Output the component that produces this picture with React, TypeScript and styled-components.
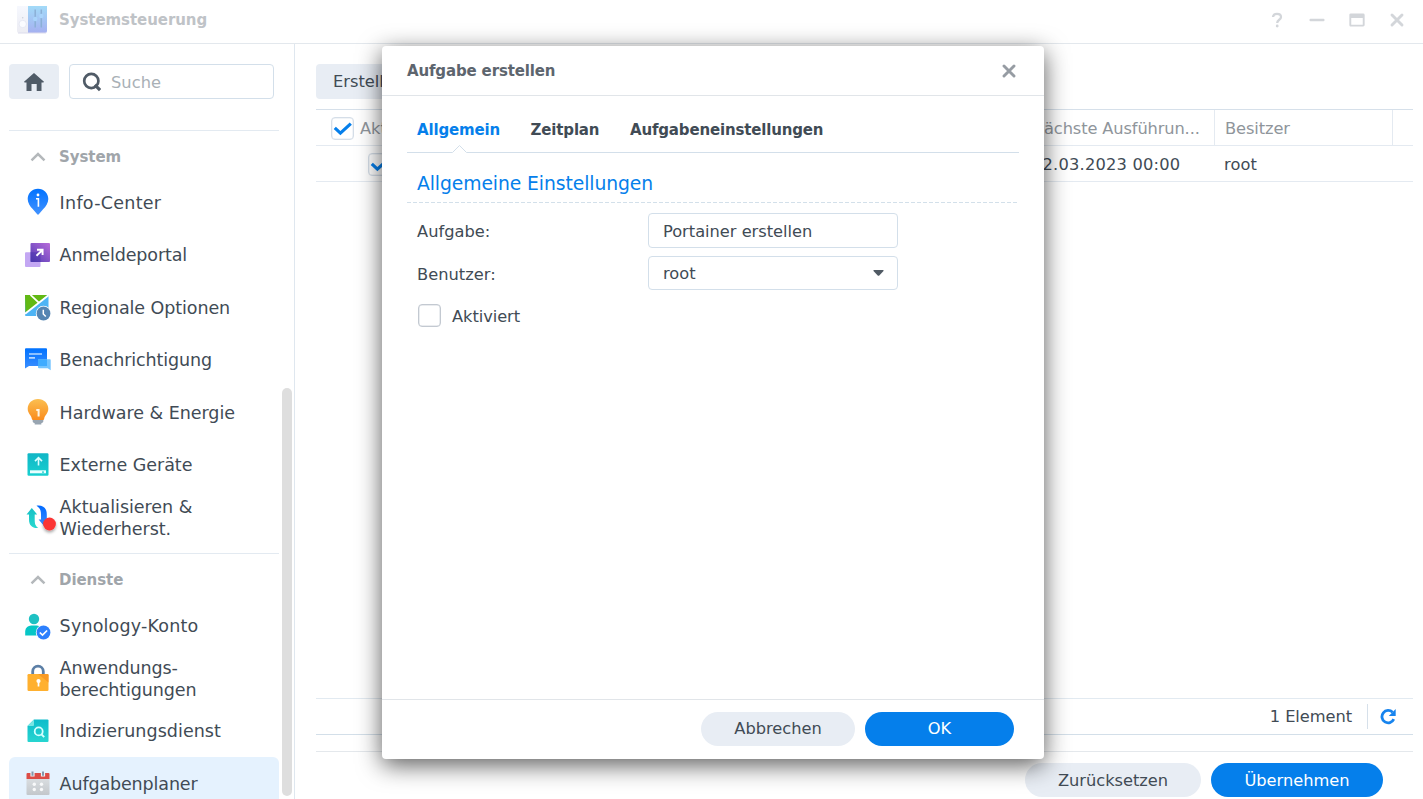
import React from "react";
import styled, { createGlobalStyle, css } from "styled-components";

const GlobalStyle = createGlobalStyle`
  * { box-sizing: border-box; }
  html, body { margin: 0; padding: 0; overflow: hidden; }
  body {
    background: #fff;
    color: #414b55;
    font-family: Verdana, "DejaVu Sans", sans-serif;
    font-size: 16.25px;
    letter-spacing: -0.004em;
  }
  svg { display: block; flex: none; }
`;

const Window = styled.div`
  position: relative;
  display: flex;
  flex-direction: column;
  width: 1423px;
  height: 799px;
  overflow: hidden;
`;

const TitleBar = styled.header`
  display: flex;
  align-items: center;
  height: 44px;
  padding: 0 18px 4px 17px;
  border-bottom: 1px solid #e3e8ed;
`;

const WindowTitle = styled.div`
  flex: 1;
  margin-left: 12px;
  font-size: 15px;
  font-weight: bold;
  color: #bfc3c7;
`;

const WindowControls = styled.div`
  display: flex;
  gap: 24px;
`;

const Body = styled.div`
  flex: 1;
  display: flex;
  min-height: 0;
`;

const Sidebar = styled.nav`
  position: relative;
  width: 295px;
  padding: 20px 15px 0 9px;
  border-right: 1px solid #dfe7ef;
  overflow: hidden;
`;

const SidebarTools = styled.div`
  display: flex;
  gap: 10px;
  margin-bottom: 31px;
`;

const HomeButton = styled.button`
  display: flex;
  align-items: center;
  justify-content: center;
  width: 50px;
  height: 35px;
  padding: 0;
  border: 0;
  border-radius: 4px;
  background: #e8edf4;
`;

const SearchBox = styled.div`
  display: flex;
  align-items: center;
  gap: 10px;
  width: 205px;
  height: 35px;
  padding: 1px 0 0 11px;
  border: 1px solid #d3dfea;
  border-radius: 4px;
  color: #a9b0b6;
  letter-spacing: 0.05px;
`;

const Group = styled.section`
  border-top: 1px solid #e3eaf1;
  padding-bottom: 9.9px;
`;

const GroupHeader = styled.div`
  display: flex;
  align-items: center;
  height: 45px;
  padding: 7px 0 0 21px;
  gap: 13px;
  font-size: 15px;
  font-weight: bold;
  color: #a0a5aa;
  svg { margin-top: -1px; }
`;

const Item = styled.div<{ $selected?: boolean; $spacing?: number }>`
  display: flex;
  align-items: center;
  gap: 6.6px;
  height: 52.5px;
  padding-left: 14px;
  border-radius: 6px;
  font-size: 17.5px;
  line-height: 22px;
  letter-spacing: ${(p) => p.$spacing ?? -0.09}px;
  background: ${(p) => (p.$selected ? "#e5f2fe" : "transparent")};
  svg { overflow: visible; }
`;

const ItemText = styled.span`
  padding-top: 1px;
`;

const ScrollThumb = styled.div`
  position: absolute;
  top: 344px;
  left: 282px;
  width: 10px;
  height: 408px;
  border-radius: 5px;
  background: #dedede;
`;

const Main = styled.main`
  flex: 1;
  display: flex;
  flex-direction: column;
  padding: 20px 10px 0 21px;
`;

const ToolButton = styled.button`
  width: 116px;
  height: 35px;
  margin-bottom: 10px;
  padding: 0 0 0 17px;
  border: 0;
  border-radius: 4px;
  background: #e8edf4;
  color: #414b55;
  font: inherit;
  text-align: left;
`;

const Table = styled.div`
  flex: 1;
  border-top: 1px solid #d6e0ea;
`;

const Row = styled.div<{ $head?: boolean }>`
  display: grid;
  grid-template-columns: 706px 193px 178px 1fr;
  height: 36px;
  border-bottom: 1px solid #e4eaf1;
  color: ${(p) => (p.$head ? "#8f959b" : "#414b55")};
`;

const Cell = styled.div<{ $divided?: boolean; $pad?: number; $spacing?: number }>`
  display: flex;
  align-items: center;
  padding-top: 2px;
  padding-left: ${(p) => p.$pad ?? 10}px;
  letter-spacing: ${(p) => p.$spacing ?? 0}px;
  white-space: nowrap;
  ${(p) => p.$divided && css`border-right: 1px solid #e4eaf1;`}
`;

const CheckBox = styled.span<{ $strong?: boolean }>`
  display: flex;
  align-items: center;
  justify-content: center;
  width: 23px;
  height: 23px;
  border: 1px solid ${(p) => (p.$strong ? "#c3c9d1" : "#d5dee8")};
  border-radius: 4px;
  background: #fff;
  box-shadow: inset 0 0 0 0.5px ${(p) => (p.$strong ? "#d5dae0" : "#e3e9f0")};
`;

const HeadLabel = styled.span`
  margin-left: 6px;
`;

const StatusBar = styled.div`
  display: flex;
  align-items: center;
  justify-content: flex-end;
  height: 37px;
  padding-right: 17px;
  border-top: 1px solid #e2eaf1;
  border-bottom: 1px solid #d3dfe9;
`;

const StatusDivider = styled.div`
  width: 1px;
  height: 25px;
  margin: 0 12px 0 15px;
  background: #d6e0ea;
`;

const ActionBar = styled.div`
  display: flex;
  justify-content: flex-end;
  gap: 10px;
  height: 48px;
  margin-top: 16px;
  padding: 11px 30px 0 0;
  border-top: 1px solid #e4e8ec;
`;

const PillButton = styled.button<{ $primary?: boolean; $width: number; $drop?: number }>`
  width: ${(p) => p.$width}px;
  height: 34px;
  padding: 0;
  border: 0;
  border-radius: 17px;
  background: ${(p) => (p.$primary ? "#057feb" : "#e8edf4")};
  color: ${(p) => (p.$primary ? "#fff" : "#414b55")};
  font: inherit;
  line-height: 34px;
  padding-top: ${(p) => p.$drop ?? 0}px;
  letter-spacing: -0.02px;
`;

const Dialog = styled.div`
  position: absolute;
  top: 46px;
  left: 382px;
  display: flex;
  flex-direction: column;
  width: 662px;
  height: 713px;
  border-radius: 4px;
  background: #fff;
  box-shadow: 0 6px 25px rgba(0, 0, 0, 0.65);
`;

const DialogHeader = styled.div`
  display: flex;
  align-items: center;
  justify-content: space-between;
  height: 50px;
  padding: 0 28px 0 25px;
  border-bottom: 1px solid #e1e5e9;
  font-size: 15px;
  font-weight: bold;
  letter-spacing: -0.15px;
  color: #5d656e;
`;

const DialogBody = styled.div`
  flex: 1;
  padding: 0 25px;
`;

const Tabs = styled.div`
  display: flex;
  gap: 30.6px;
  height: 57px;
  padding: 0 10px;
  border-bottom: 1px solid #d3dfea;
`;

const Tab = styled.div<{ $active?: boolean }>`
  position: relative;
  line-height: 69px;
  font-size: 15px;
  font-weight: bold;
  letter-spacing: -0.16px;
  color: ${(p) => (p.$active ? "#057feb" : "#414b55")};
`;

const Notch = styled.svg`
  position: absolute;
  left: 34px;
  top: 48px;
`;

const SectionTitle = styled.div`
  height: 50px;
  padding-left: 10px;
  font-size: 18.75px;
  line-height: 62px;
  letter-spacing: -0.09px;
  color: #057feb;
  background: repeating-linear-gradient(90deg, #d3e0ea 0 4px, transparent 4px 6px) left bottom / 100% 1px no-repeat;
`;

const Field = styled.div<{ $top: number; $indent?: number }>`
  display: flex;
  align-items: center;
  margin-top: ${(p) => p.$top}px;
  padding-left: ${(p) => p.$indent ?? 10}px;
`;

const FieldLabel = styled.label`
  width: 231px;
  padding-top: 2px;
  letter-spacing: 0.02px;
`;

const Input = styled.div<{ $height: number; $drop?: number }>`
  display: flex;
  align-items: center;
  justify-content: space-between;
  width: 250px;
  height: ${(p) => p.$height}px;
  padding: ${(p) => p.$drop ?? 0}px 13px 0 14px;
  border: 1px solid #d3dfea;
  border-radius: 4px;
  letter-spacing: -0.02px;
`;

const CheckLabel = styled.span`
  margin-left: 11px;
  padding-top: 1px;
`;

const DialogFooter = styled.div`
  display: flex;
  justify-content: flex-end;
  gap: 10px;
  height: 60px;
  padding: 12px 30px 0 0;
  border-top: 1px solid #e1e5e9;
`;

const Icon = ({ children }: { children: React.ReactNode }) => (
  <svg width="30" height="30" viewBox="0 0 30 30" fill="none">{children}</svg>
);

const Gradient = ({ id, from, to }: { id: string; from: string; to: string }) => (
  <linearGradient id={id} x1="0" y1="0" x2="0" y2="1">
    <stop stopColor={from} />
    <stop offset="1" stopColor={to} />
  </linearGradient>
);

const AppIcon = () => (
  <svg width="30" height="30" viewBox="0 0 30 30">
    <defs><Gradient id="app" from="#a2daf8" to="#a5b0f0" /><Gradient id="appw" from="#f6f8fe" to="#ececf3" /></defs>
    <path d="M0 1h12v27H2a2 2 0 0 1-2-2z" fill="url(#appw)" />
    <path d="M11 1h19v25a2 2 0 0 1-2 2H11z" fill="url(#app)" />
    <path d="M1 28h28" stroke="#dcdcec" />
    <path d="M18.200 4.500v18M24.300 4.500v18" stroke="#8bb0d6" strokeWidth="1.500" />
    <circle cx="18.200" cy="14" r="2.200" fill="#a9d4fb" />
    <circle cx="24.300" cy="11" r="2.200" fill="#a9d4fb" />
    <circle cx="5.700" cy="19" r="3.700" fill="#fafbff" stroke="#e2e5f1" strokeWidth=".8" />
    <circle cx="5.700" cy="12.800" r=".8" fill="#cdd1dc" />
  </svg>
);

const CloseIcon = ({ color, size = 14 }: { color: string; size?: number }) => (
  <svg width={size} height={size} viewBox={`0 0 ${size} ${size}`} fill="none">
    <path
      d={`M${size / 2 - 5} ${size / 2 - 5}l10 10M${size / 2 + 5} ${size / 2 - 5}l-10 10`}
      stroke={color}
      strokeWidth="2.900"
      strokeLinecap="round"
    />
  </svg>
);

const CheckMark = () => (
  <svg width="20" height="20" viewBox="0 0 20 20" fill="none">
    <path d="M1.800 8.900l5.600 5.200L17.800 4.600" stroke="#057feb" strokeWidth="3.200" />
  </svg>
);

const Chevron = () => (
  <svg width="16" height="10" viewBox="0 0 16 10" fill="none">
    <path d="M1.500 8.300L8 2l6.500 6.300" stroke="#b4b8bb" strokeWidth="2.500" />
  </svg>
);

const InfoIcon = () => (
  <Icon>
    <defs><Gradient id="pin" from="#0072ff" to="#4292ff" /></defs>
    <path d="M15 1.800c5.900 0 10.300 4.500 10.300 10.200 0 4-2.400 7.300-5 10.100l-4.300 5a1.300 1.300 0 0 1-2 0l-4.300-5C7.100 19.300 4.700 16 4.700 12 4.700 6.300 9.100 1.800 15 1.800z" fill="url(#pin)" />
    <circle cx="15" cy="8" r="1.400" fill="#fff" />
    <path d="M13 11.800h2.400v7.900" stroke="#fff" strokeWidth="1.600" />
  </Icon>
);

const PortalIcon = () => (
  <Icon>
    <linearGradient id="portal" x1="0" y1="1" x2="1" y2="0"><stop stopColor="#4f3bb4" /><stop offset="1" stopColor="#b86cda" /></linearGradient>
    <rect x="2" y="12.200" width="15.500" height="14.800" rx="1" fill="#c3a7f3" />
    <rect x="7.500" y="3" width="19.500" height="19" rx="1" fill="url(#portal)" />
    <path d="M7.500 12.200h10V22h-10z" fill="#4230a8" opacity=".45" />
    <path d="M13.500 15.700l6-5.700M14 9.800h5.600v5.300" stroke="#fff" strokeWidth="1.900" />
  </Icon>
);

const RegionIcon = () => (
  <Icon>
    <rect x="2" y="3" width="23.500" height="21" rx="1" fill="#4db4f5" />
    <path d="M2 3h22.500L2.500 21.500z" fill="#62b914" />
    <path d="M2 21.800L25.500 3.300M7.500 2.800l8.500 8" stroke="#fff" strokeWidth="1.800" />
    <circle cx="20.500" cy="21.500" r="7.700" fill="#fff" />
    <circle cx="20.500" cy="21.500" r="6.900" fill="#5585b2" />
    <path d="M20.300 17.800v4.200l2.500 2.600" stroke="#fff" strokeWidth="1.500" />
  </Icon>
);

const MessageIcon = () => (
  <Icon>
    <defs><Gradient id="msg" from="#0072ff" to="#3b8eff" /></defs>
    <path d="M3 3.300h20a1 1 0 0 1 1 1V21H6L2 23.500V4.300a1 1 0 0 1 1-1z" fill="url(#msg)" />
    <path d="M15 14.300h12a1 1 0 0 1 .7 1v9.900l-3-2H16a1 1 0 0 1-1-1z" fill="#74c4ff" />
    <path d="M15 14.300h9V21h-9z" fill="#3fabff" />
    <path d="M6 9h13M6 12.900h6" stroke="#b5d8ff" strokeWidth="1.700" />
  </Icon>
);

const BulbIcon = () => (
  <Icon>
    <defs><Gradient id="bulb" from="#fbbf51" to="#fa8c1d" /></defs>
    <path d="M9.700 23h10.600v1.500a1.500 1.500 0 0 1-1 1.300l-1 .4v1.300h-6.600v-1.300l-1-.4a1.500 1.500 0 0 1-1-1.300z" fill="#98a5b1" />
    <path d="M15 2c5.900 0 10.300 4.400 10.300 9.800 0 5-3.600 6-4.200 10.100-.1.700-.4 1.100-1 1.100H9.900c-.6 0-.9-.4-1-1.100C8.300 17.800 4.700 16.800 4.700 11.800 4.700 6.400 9.100 2 15 2z" fill="url(#bulb)" />
    <path d="M13.300 12.900h2.300v6.600" stroke="#fff5e4" strokeWidth="2" />
  </Icon>
);

const DriveIcon = () => (
  <Icon>
    <defs><Gradient id="drive" from="#10b6c6" to="#18d0d0" /></defs>
    <rect x="4.500" y="3.300" width="21" height="22.500" rx="1.200" fill="url(#drive)" />
    <path d="M15.500 15.500V7.800M12 11.100l3.500-3.500 3.500 3.500" stroke="#d9ffff" strokeWidth="1.600" />
    <path d="M7 20.300h16v3H7z" fill="#e9ffff" />
    <circle cx="20" cy="22.100" r=".9" fill="#12c5c9" />
  </Icon>
);

const UpdateIcon = () => (
  <Icon>
    <defs>
      <Gradient id="upd" from="#17c0c5" to="#28d8cf" />
      <Gradient id="upd2" from="#0069ff" to="#3c8cff" />
      <filter id="dot" x="-50%" y="-50%" width="200%" height="200%"><feDropShadow dx="0" dy="2" stdDeviation="1.500" floodOpacity=".35" /></filter>
    </defs>
    <path d="M8.800 6l5.400 6.500h-2.500v5c0 4.500.8 6.500 3.600 8.500C9.500 26.500 6 23.500 6 17.500v-5H3.500z" fill="url(#upd)" />
    <path d="M13.500 3.700c7-.7 10.300 2.700 10.300 8.800v5h2.700L21 24l-5.400-6.500H18v-5c0-4.300-1.300-6.800-4.500-8.800z" fill="url(#upd2)" />
    <circle cx="26.500" cy="22" r="6.400" fill="#fb3535" filter="url(#dot)" />
  </Icon>
);

const AccountIcon = () => (
  <Icon>
    <circle cx="11" cy="8" r="5.200" fill="#1ec1c3" />
    <path d="M2.200 24.500V20a6 6 0 0 1 6-5.600h5.500a6 6 0 0 1 6 5.600v4.500z" fill="#06c6c6" />
    <circle cx="20.500" cy="21.500" r="7.700" fill="#fff" />
    <circle cx="20.500" cy="21.500" r="6.900" fill="#2d80fd" />
    <path d="M16.800 21.500l2.700 2.600 4.600-4.600" stroke="#fff" strokeWidth="1.700" />
  </Icon>
);

const LockIcon = () => (
  <Icon>
    <path d="M9.700 12V8.500a5.300 5.300 0 0 1 10.600 0V12" stroke="#5c7fa6" strokeWidth="2.800" />
    <rect x="4.500" y="11" width="21" height="17" rx="1.200" fill="#ffb02f" />
    <path d="M15 11h9.500a1 1 0 0 1 1 1v7.500z" fill="#f99a24" />
    <circle cx="15.500" cy="18" r="2.100" fill="#fff" />
    <path d="M15.500 18v5.500" stroke="#fff" strokeWidth="1.700" />
  </Icon>
);

const IndexIcon = () => (
  <Icon>
    <defs><Gradient id="idx" from="#0dbccb" to="#27d5d0" /></defs>
    <path d="M11 3.500h13.500a1 1 0 0 1 1 1V25a1 1 0 0 1-1 1h-19a1 1 0 0 1-1-1V10z" fill="url(#idx)" />
    <path d="M11 3.500V9a1 1 0 0 1-1 1H4.500z" fill="#79e6e4" />
    <circle cx="15.700" cy="15.400" r="4" stroke="#d4ffff" strokeWidth="1.800" />
    <path d="M18.500 18.400l2.700 2.700" stroke="#d4ffff" strokeWidth="2" />
  </Icon>
);

const CalendarIcon = () => (
  <Icon>
    <defs><Gradient id="cal" from="#d9dde0" to="#c3c7cb" /></defs>
    <path d="M3.500 11h23v15a1 1 0 0 1-1 1h-21a1 1 0 0 1-1-1z" fill="url(#cal)" />
    <path d="M4.500 5h21a1 1 0 0 1 1 1v5h-23V6a1 1 0 0 1 1-1z" fill="#dc4c46" />
    <path d="M9.500 4v4.500M20 4v4.500" stroke="#eef1f4" strokeWidth="4.200" />
    <path d="M9.500 3.500v4.200M20 3.500v4.200" stroke="#8397ab" strokeWidth="2" />
    <g fill="#f8f9fa"><circle cx="11.300" cy="16.200" r="1.700" /><circle cx="18.500" cy="16.200" r="1.700" /><circle cx="11.300" cy="21.500" r="1.700" /><circle cx="18.500" cy="21.500" r="1.700" /></g>
  </Icon>
);

export default function App() {
  return (
    <Window>
      <GlobalStyle />
      <TitleBar>
        <AppIcon />
        <WindowTitle>Systemsteuerung</WindowTitle>
        <WindowControls>
          <svg width="16" height="16" viewBox="0 0 16 16" fill="none">
            <path d="M4 5C4.200 2.700 5.800 1.800 8 1.800c2.300 0 4 1.100 4 3.100 0 2.900-3.800 2.800-3.800 6" stroke="#d3d6da" strokeWidth="2.300" />
            <circle cx="8.200" cy="14" r="1.400" fill="#d3d6da" />
          </svg>
          <svg width="16" height="16" viewBox="0 0 16 16"><rect x=".5" y="6.700" width="15" height="2.600" rx="1" fill="#d3d6da" /></svg>
          <svg width="16" height="16" viewBox="0 0 16 16" fill="none">
            <rect x="1.300" y="2.400" width="13.400" height="11.200" rx=".5" stroke="#d3d6da" strokeWidth="1.900" />
            <path d="M1 2h14v4H1z" fill="#d3d6da" />
          </svg>
          <CloseIcon color="#d3d6da" size={16} />
        </WindowControls>
      </TitleBar>
      <Body>
        <Sidebar>
          <SidebarTools>
            <HomeButton>
              <svg width="22" height="20" viewBox="0 0 22 20">
                <path d="M11 1l10 8.700-.6.800H18.500V19H13.700v-7H8.500v7H3.500v-8.500H1.600L1 9.700z" fill="#4f5b67" />
              </svg>
            </HomeButton>
            <SearchBox>
              <svg width="20" height="22" viewBox="0 0 20 22" fill="none">
                <circle cx="10.300" cy="10" r="7.100" stroke="#505b67" strokeWidth="2.700" />
                <path d="M13.800 13.800l5.300 5.300" stroke="#505b67" strokeWidth="3.200" />
              </svg>
              Suche
            </SearchBox>
          </SidebarTools>
          <Group>
            <GroupHeader><Chevron />System</GroupHeader>
            <Item $spacing={0.28}><InfoIcon /><ItemText>Info-Center</ItemText></Item>
            <Item $spacing={-0.12}><PortalIcon /><ItemText>Anmeldeportal</ItemText></Item>
            <Item><RegionIcon /><ItemText>Regionale Optionen</ItemText></Item>
            <Item $spacing={-0.12}><MessageIcon /><ItemText>Benachrichtigung</ItemText></Item>
            <Item $spacing={-0.02}><BulbIcon /><ItemText>Hardware &amp; Energie</ItemText></Item>
            <Item $spacing={-0.03}><DriveIcon /><ItemText>Externe Geräte</ItemText></Item>
            <Item $spacing={-0.03}><UpdateIcon /><ItemText>Aktualisieren &amp;<br />Wiederherst.</ItemText></Item>
          </Group>
          <Group>
            <GroupHeader><Chevron />Dienste</GroupHeader>
            <Item $spacing={0.18}><AccountIcon /><ItemText>Synology-Konto</ItemText></Item>
            <Item><LockIcon /><ItemText>Anwendungs-<br />berechtigungen</ItemText></Item>
            <Item $spacing={0.05}><IndexIcon /><ItemText>Indizierungsdienst</ItemText></Item>
            <Item $selected $spacing={-0.13}><CalendarIcon /><ItemText>Aufgabenplaner</ItemText></Item>
          </Group>
          <ScrollThumb />
        </Sidebar>
        <Main>
          <ToolButton>Erstellen</ToolButton>
          <Table>
            <Row $head>
              <Cell $pad={15}><CheckBox><CheckMark /></CheckBox><HeadLabel>Aktiviert</HeadLabel></Cell>
              <Cell $divided $spacing={-0.13}>Nächste Ausführun...</Cell>
              <Cell $divided $spacing={-0.1}>Besitzer</Cell>
            </Row>
            <Row>
              <Cell $pad={52}><CheckBox><CheckMark /></CheckBox></Cell>
              <Cell $spacing={0.2}>12.03.2023 00:00</Cell>
              <Cell $pad={9} $spacing={0.1}>root</Cell>
            </Row>
          </Table>
          <StatusBar>
            1 Element
            <StatusDivider />
            <svg width="16" height="16" viewBox="0 0 16 16" fill="none">
              <path d="M12.600 3.300A6.200 6.200 0 1 0 13.800 10.200" stroke="#1784ee" strokeWidth="2.800" />
              <path d="M15.700 0v6.900H8.800z" fill="#1784ee" />
            </svg>
          </StatusBar>
          <ActionBar>
            <PillButton $width={176} $drop={1}>Zurücksetzen</PillButton>
            <PillButton $width={172} $drop={1} $primary>Übernehmen</PillButton>
          </ActionBar>
        </Main>
      </Body>
      <Dialog>
        <DialogHeader>Aufgabe erstellen<CloseIcon color="#969ca3" /></DialogHeader>
        <DialogBody>
          <Tabs>
            <Tab $active>
              Allgemein
              <Notch width="17" height="10" viewBox="0 0 17 10">
                <path d="M0 7.500h2L8.500 1l6.500 6.500h2V10H0z" fill="#fff" />
                <path d="M0 8.500h1.500l7-7 7 7H17" fill="none" stroke="#d3dfea" />
              </Notch>
            </Tab>
            <Tab>Zeitplan</Tab>
            <Tab>Aufgabeneinstellungen</Tab>
          </Tabs>
          <SectionTitle>Allgemeine Einstellungen</SectionTitle>
          <Field $top={10}>
            <FieldLabel>Aufgabe:</FieldLabel>
            <Input $height={35} $drop={1}>Portainer erstellen</Input>
          </Field>
          <Field $top={8}>
            <FieldLabel>Benutzer:</FieldLabel>
            <Input $height={34}>
              root
              <svg width="11" height="6" viewBox="0 0 11 6"><path d="M1 0h9q1 0 .5 1L6.500 5.300q-1 1-2 0L.5 1Q0 0 1 0z" fill="#505a64" /></svg>
            </Input>
          </Field>
          <Field $top={14} $indent={11}>
            <CheckBox $strong />
            <CheckLabel>Aktiviert</CheckLabel>
          </Field>
        </DialogBody>
        <DialogFooter>
          <PillButton $width={154}>Abbrechen</PillButton>
          <PillButton $width={149} $primary>OK</PillButton>
        </DialogFooter>
      </Dialog>
    </Window>
  );
}
